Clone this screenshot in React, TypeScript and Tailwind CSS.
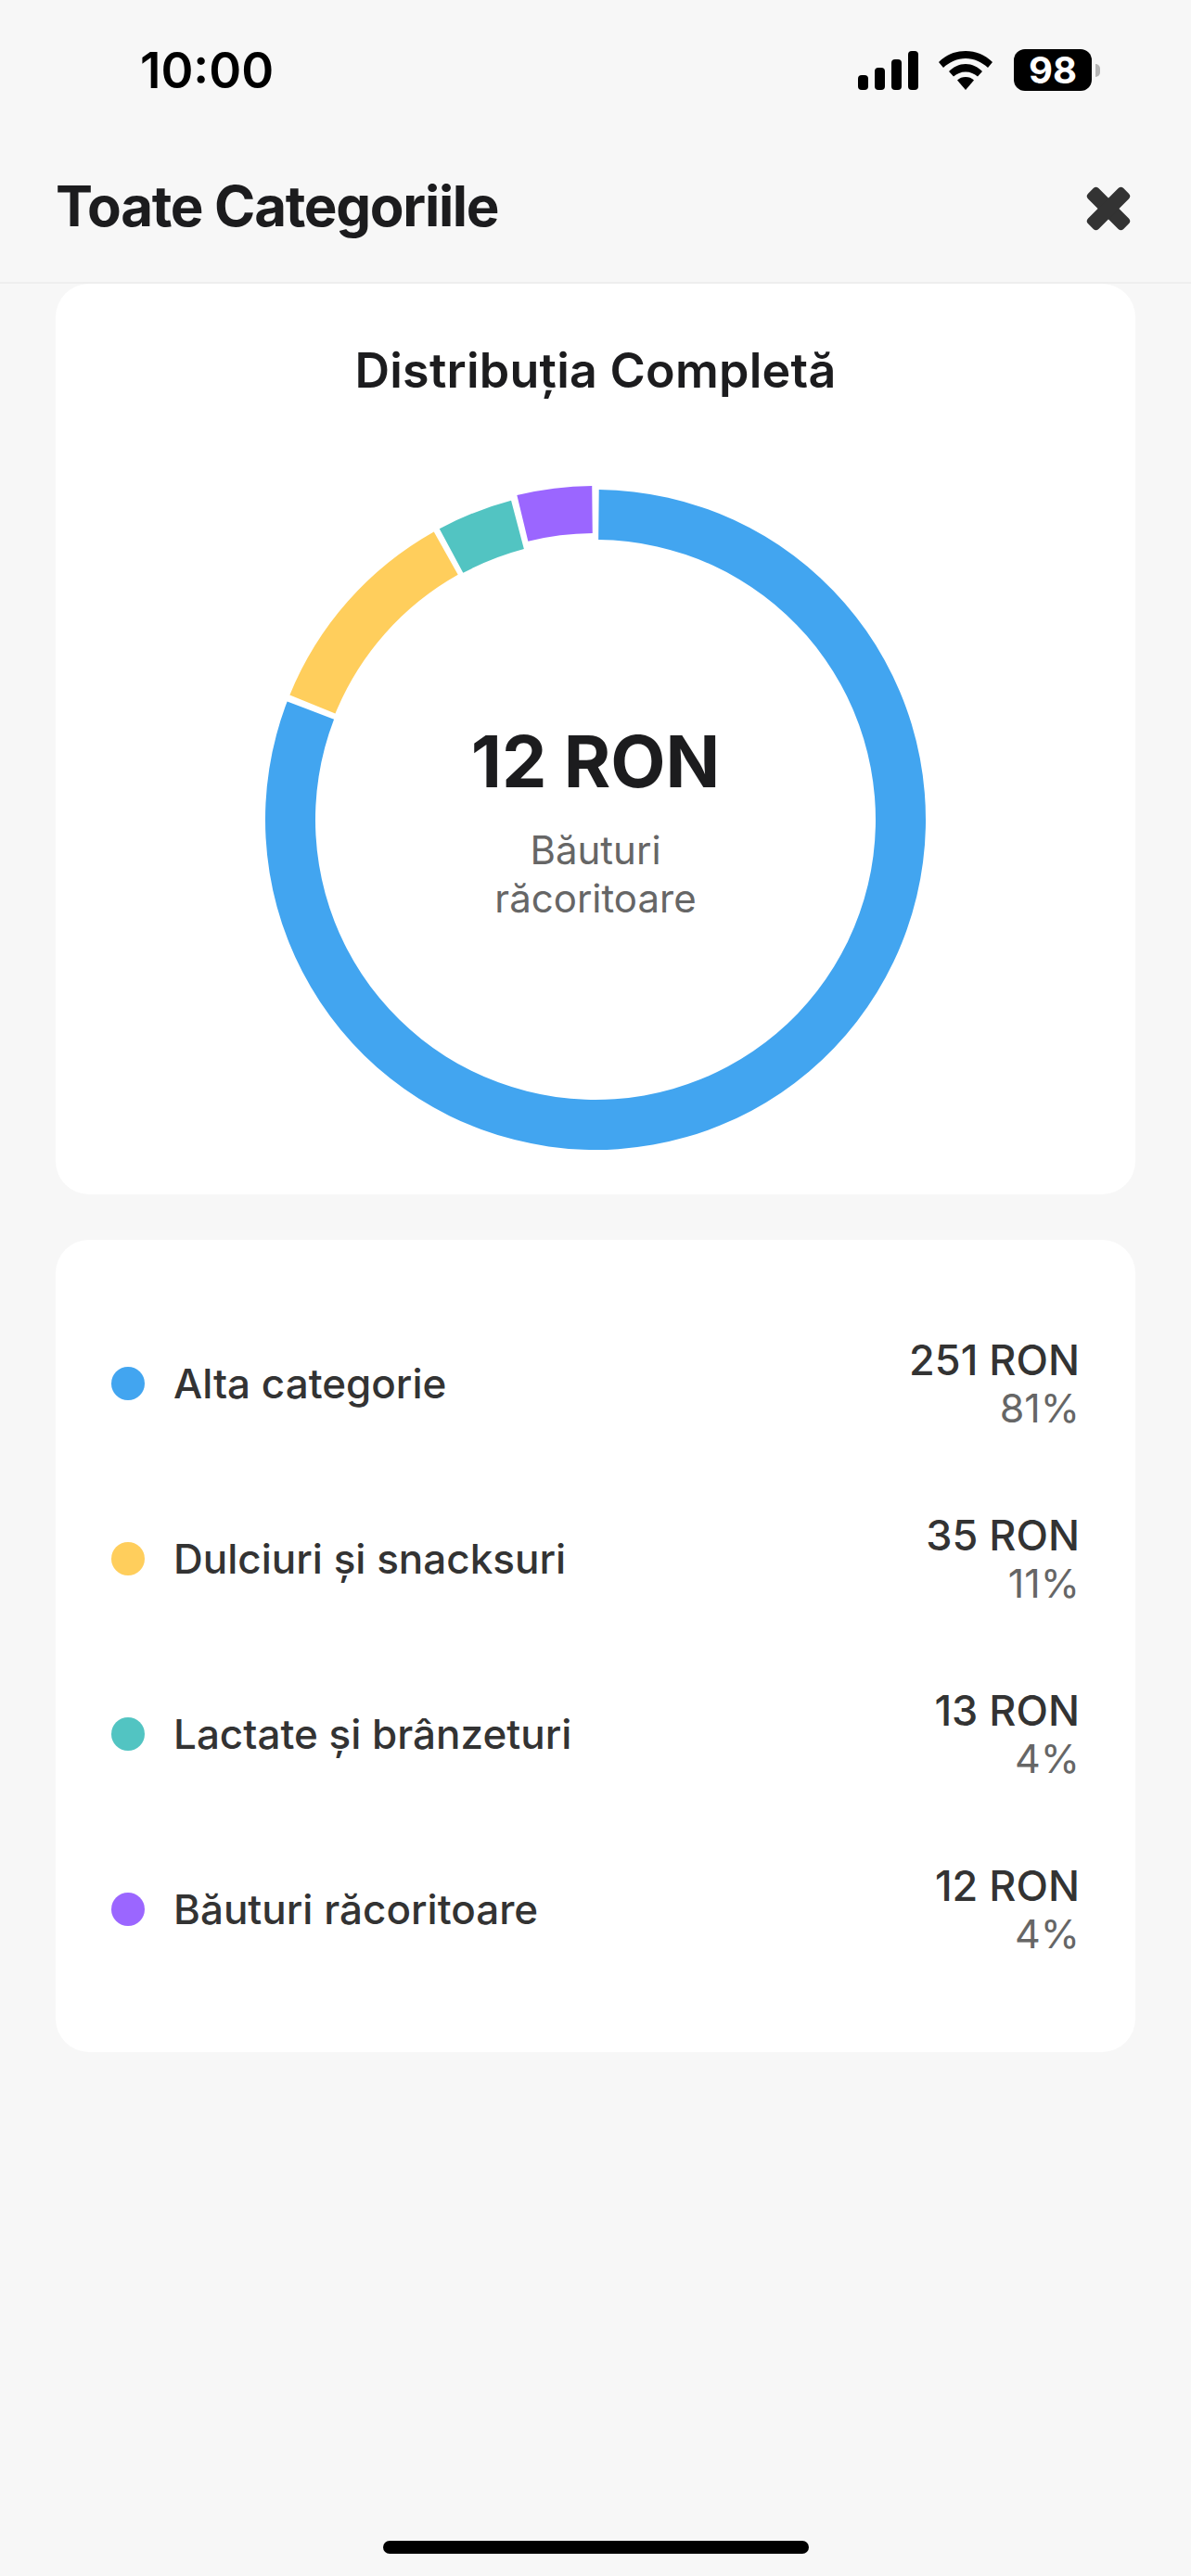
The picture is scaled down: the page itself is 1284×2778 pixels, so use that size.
const font = "font-['Inter','Liberation_Sans',sans-serif]";

const CX = 400;
const CY = 400;

function point(r: number, deg: number) {
  const a = ((deg - 90) * Math.PI) / 180;
  return `${(CX + r * Math.cos(a)).toFixed(2)} ${(CY + r * Math.sin(a)).toFixed(2)}`;
}

function arc(inner: number, outer: number, from: number, to: number) {
  const large = to - from > 180 ? 1 : 0;
  return `M${point(outer, from)} A${outer} ${outer} 0 ${large} 1 ${point(outer, to)} L${point(inner, to)} A${inner} ${inner} 0 ${large} 0 ${point(inner, from)} Z`;
}

const segments = [
  { color: '#42a5f0', inner: 302, outer: 356, from: 0.6, to: 291 },
  { color: '#ffce5c', inner: 303, outer: 356, from: 292.2, to: 330.7 },
  { color: '#52c4c2', inner: 302, outer: 356, from: 331.8, to: 345.2 },
  { color: '#9b66ff', inner: 309, outer: 360, from: 346.4, to: 359.4 },
];

const rows = [
  { name: 'Alta categorie', amount: '251 RON', pct: '81%', color: '#42a5f0' },
  { name: 'Dulciuri și snacksuri', amount: '35 RON', pct: '11%', color: '#ffce5c' },
  { name: 'Lactate și brânzeturi', amount: '13 RON', pct: '4%', color: '#52c4c2' },
  { name: 'Băuturi răcoritoare', amount: '12 RON', pct: '4%', color: '#9b66ff' },
];

function StatusIcons() {
  return (
    <div className="flex items-center gap-[23px]">
      <svg width="65" height="42" viewBox="0 0 65 42" fill="#000" className="mr-[-1px]">
        <rect x="0" y="26" width="11" height="16" rx="4" />
        <rect x="18" y="18" width="11" height="24" rx="4" />
        <rect x="36" y="9" width="11" height="33" rx="4" />
        <rect x="54" y="0" width="11" height="42" rx="4" />
      </svg>
      <svg width="58" height="42" viewBox="0 0 58 42" fill="#000">
        <path d="M29 0C18 0 8 4 0 12l5 6c6.500-6 15-10 24-10s17.500 4 24 10l5-6C50 4 40 0 29 0Z" />
        <path d="M29 14c-7 0-13 3-18 8l5 5.500c3.500-3 8-5 13-5s9.500 2 13 5l5-5.500c-5-5-11-8-18-8Z" />
        <path d="M29 28c-3.500 0-6.500 1-9 3.500l9 10.500 9-10.500c-2.500-2.500-5.500-3.500-9-3.500Z" />
      </svg>
      <div className="flex items-center">
        <div className="flex h-[45px] w-[84px] items-center justify-center rounded-[12px] bg-black text-[40px] font-bold leading-none text-white">
          98
        </div>
        <div className="ml-[4px] h-[14px] w-[5px] rounded-r-full bg-[#b5b5b5]" />
      </div>
    </div>
  );
}

export default function App() {
  return (
    <div className={`${font} relative h-[2778px] w-[1284px] overflow-hidden bg-[#f7f7f7]`}>
      <div className="flex h-[150px] items-start justify-between pl-[151px] pr-[98px] pt-[46px]">
        <span className="text-[53px] font-semibold leading-[60px] text-black">10:00</span>
        <div className="pt-[7px]">
          <StatusIcons />
        </div>
      </div>

      <div className="flex h-[156px] items-start justify-between border-b-2 border-[#eeeeee] pl-[60px] pr-[65px] pt-[36px]">
        <h1 className="text-[60px] font-bold leading-[72px] tracking-[-1.3px] text-[#1c1c1e]">Toate Categoriile</h1>
        <svg width="48" height="48" viewBox="0 0 48 48" fill="#333333" className="mt-[15px]">
          <rect x="-3" y="16" width="54" height="16" rx="4" transform="rotate(45 24 24)" />
          <rect x="-3" y="16" width="54" height="16" rx="4" transform="rotate(-45 24 24)" />
        </svg>
      </div>

      <div className="mx-[60px] flex flex-col items-center rounded-[36px] bg-white pb-[44px] pt-[64px]">
        <h2 className="text-[52px] font-semibold leading-[60px] tracking-[0.25px] text-[#1c1c1e]">Distribuția Completă</h2>
        <div className="relative mt-[94px] h-[720px] w-[720px]">
          <svg width="720" height="720" viewBox="40 40 720 720">
            {segments.map((s) => (
              <path key={s.color} d={arc(s.inner, s.outer, s.from, s.to)} fill={s.color} />
            ))}
          </svg>
          <div className="absolute inset-0 flex flex-col items-center justify-center text-center">
            <div className="text-[77px] font-bold leading-[96px] text-[#1c1c1e]">12 RON</div>
            <div className="mt-[22px] w-[300px] text-[42px] leading-[52px] text-[#666666]">Băuturi răcoritoare</div>
          </div>
        </div>
      </div>

      <div className="mx-[60px] mt-[49px] flex flex-col gap-[89px] rounded-[36px] bg-white pb-[104px] pl-[60px] pr-[60px] pt-[105px]">
        {rows.map((r) => (
          <div key={r.name} className="flex h-[100px] items-center justify-between">
            <div className="flex items-center gap-[31px]">
              <span className="h-[36px] w-[36px] rounded-full" style={{ backgroundColor: r.color }} />
              <span className="text-[44px] font-medium text-[#333333]">{r.name}</span>
            </div>
            <div className="flex flex-col items-end">
              <span className="text-[45px] font-medium leading-[52px] text-[#333333]">{r.amount}</span>
              <span className="text-[43px] leading-[50px] text-[#666666]">{r.pct}</span>
            </div>
          </div>
        ))}
      </div>

      <div className="absolute bottom-[24px] left-[413px] h-[14px] w-[459px] rounded-full bg-black" />
    </div>
  );
}
